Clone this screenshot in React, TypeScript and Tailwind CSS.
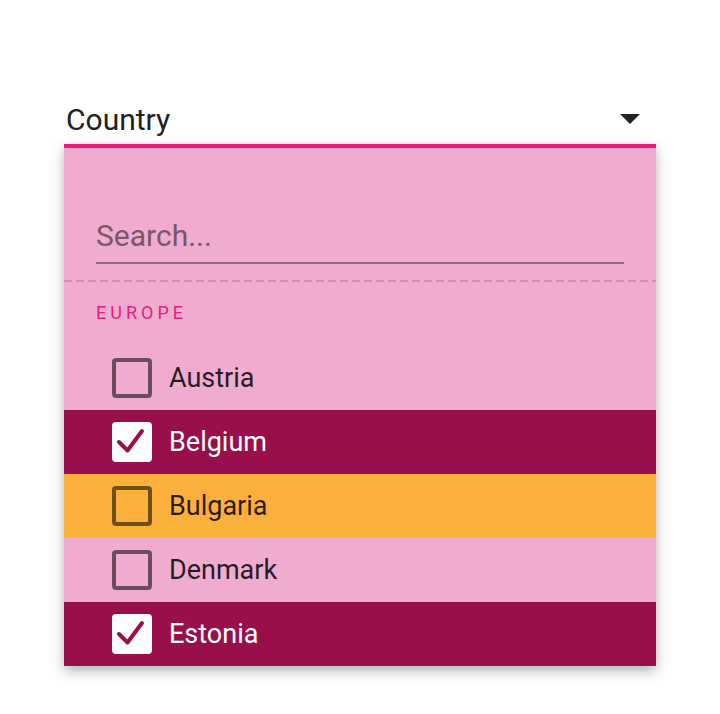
import React from "react";

type Country = { name: string; checked: boolean; highlight?: boolean };

const countries: Country[] = [
  { name: "Austria", checked: false },
  { name: "Belgium", checked: true },
  { name: "Bulgaria", checked: false, highlight: true },
  { name: "Denmark", checked: false },
  { name: "Estonia", checked: true },
];

const CheckBox: React.FC<{ checked: boolean }> = ({ checked }) =>
  checked ? (
    <div className="flex h-10 w-10 shrink-0 items-center justify-center rounded-[4px] bg-white">
      <svg width="40" height="40" viewBox="0 0 40 40" fill="none">
        <polyline
          points="7,20 15.5,28.5 30,9"
          stroke="#99104c"
          strokeWidth="4"
          strokeLinecap="round"
          strokeLinejoin="round"
        />
      </svg>
    </div>
  ) : (
    <div className="h-10 w-10 shrink-0 rounded-[4px] border-4 border-black/55" />
  );

const Row: React.FC<Country> = ({ name, checked, highlight }) => {
  const bg = checked ? "bg-[#990f4b]" : highlight ? "bg-[#fbb03b]" : "";
  const text = checked ? "text-white" : "text-black/85";
  return (
    <div className={`flex h-16 items-center pl-12 ${bg}`}>
      <CheckBox checked={checked} />
      <span className={`ml-[17px] text-[27px] leading-8 ${text}`}>{name}</span>
    </div>
  );
};

export default function App() {
  return (
    <div className="min-h-[714px] w-[720px] bg-white font-['Roboto',sans-serif]">
      <div className="mx-16 pt-[102px]">
        <div className="flex h-9 items-center justify-between pl-0.5 pr-4">
          <span className="text-[30px] leading-9 text-[#212121]">Country</span>
          <svg width="20" height="10" viewBox="0 0 20 10" className="-mt-[2px]">
            <polygon points="0,0 20,0 10,10" fill="#212121" />
          </svg>
        </div>
        <div className="mt-[6px] shadow-[0_5px_12px_rgba(0,0,0,0.3)]">
          <div className="h-1 bg-[#e91e7b]" />
          <div className="bg-[#efacd0] pt-[68px]">
            <div className="mx-8 border-b-2 border-[#946b81] pb-[6px]">
              <input
                className="block h-10 w-full bg-transparent text-[30px] leading-10 text-black/80 outline-none placeholder:text-[#7a5669]"
                placeholder="Search..."
              />
            </div>
            <div className="mt-4 h-[2px] bg-[repeating-linear-gradient(90deg,#d98cb5_0_8px,transparent_8px_12px)]" />
            <div className="mx-8 mt-[19px] text-[18px] leading-6 tracking-[4px] text-[#e91e7b]">
              EUROPE
            </div>
            <div className="mt-[21px]">
              {countries.map((c) => (
                <Row key={c.name} {...c} />
              ))}
            </div>
          </div>
        </div>
      </div>
    </div>
  );
}
